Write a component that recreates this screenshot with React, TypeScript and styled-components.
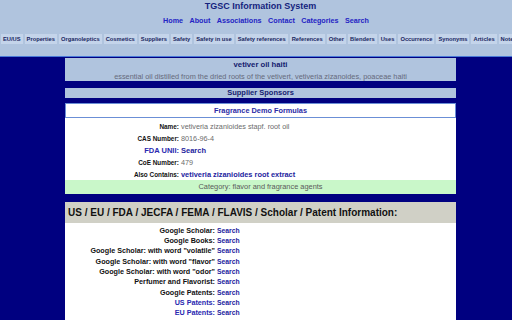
import React from 'react';
import styled, { createGlobalStyle } from 'styled-components';

const GlobalStyle = createGlobalStyle`
  html, body {
    margin: 0;
    padding: 0;
    background: #000080;
  }
  body {
    font-family: "Liberation Sans", Arial, sans-serif;
    width: 512px;
    height: 320px;
    overflow: hidden;
  }
`;

const Header = styled.header`
  background: #b0c4de;
  height: 56px;
  border-bottom: 1px solid #4a7ad8;
  display: flex;
  flex-direction: column;
  align-items: center;
`;

const SiteTitle = styled.h1`
  margin: 0;
  padding-left: 9px;
  font-size: 9px;
  line-height: 12px;
  font-weight: bold;
  color: #14237d;
`;

const Nav = styled.nav`
  margin-top: 3px;
  padding-left: 20px;
  display: flex;
  gap: 6.5px;
  line-height: 11px;
`;

const NavLink = styled.a`
  font-size: 7.2px;
  font-weight: bold;
  color: #2323c4;
  text-decoration: none;
`;

const Tabs = styled.div`
  margin-top: 8px;
  align-self: stretch;
  display: flex;
  gap: 2px;
  padding-left: 1px;
  overflow: hidden;
  white-space: nowrap;
`;

const Tab = styled.span`
  flex: none;
  height: 10px;
  line-height: 10px;
  padding: 0 2px;
  background: #c4d4ea;
  font-size: 5.75px;
  font-weight: bold;
  color: #19265f;
`;

const Main = styled.main`
  padding: 1px 56px 0 65px;
  display: flex;
  flex-direction: column;
`;

const TitleBox = styled.section`
  background: #b0c4de;
  height: 23px;
  padding-top: 2px;
  box-sizing: border-box;
  text-align: center;
`;

const ProductName = styled.div`
  font-size: 7.7px;
  font-weight: bold;
  line-height: 10px;
  color: #14206e;
`;

const Description = styled.div`
  margin-top: 3px;
  font-size: 7.35px;
  line-height: 8px;
  color: #666a7c;
  white-space: nowrap;
`;

const BarBox = styled.div`
  margin-top: 7px;
  background: #b0c4de;
  height: 10px;
  line-height: 10px;
  text-align: center;
  font-size: 7.5px;
  font-weight: bold;
  color: #14206e;
`;

const WhitePanel = styled.section<{ $gap: number }>`
  margin-top: ${p => p.$gap}px;
  background: #fff;
  display: flex;
  flex-direction: column;
`;

const FormulasBox = styled.div`
  height: 15px;
  box-sizing: border-box;
  border: 1px solid #6b8fd6;
  line-height: 13px;
  text-align: center;
  font-size: 7.35px;
  font-weight: bold;
  color: #2a2aa6;
`;

const DataGrid = styled.div<{ $label: number; $row: number }>`
  display: grid;
  grid-template-columns: ${p => p.$label}px 1fr;
  grid-auto-rows: ${p => p.$row}px;
  column-gap: 2px;
  align-items: center;
  padding-top: 2px;
`;

const Label = styled.span<{ $size: number; $link?: boolean }>`
  text-align: right;
  font-size: ${p => p.$size}px;
  font-weight: bold;
  color: ${p => (p.$link ? '#2828b0' : '#111')};
  white-space: nowrap;
`;

const Value = styled.span`
  font-size: 7.25px;
  color: #6b6b6b;
  white-space: nowrap;
`;

const ValueLink = styled.a<{ $size: number }>`
  font-size: ${p => p.$size}px;
  font-weight: bold;
  color: #23239e;
  text-decoration: none;
  white-space: nowrap;
`;

const Category = styled.div`
  height: 14px;
  line-height: 14px;
  background: #c9f7c9;
  text-align: center;
  font-size: 7.4px;
  color: #5a5a5a;
`;

const InfoHeading = styled.h2`
  margin: 8px 0 0;
  height: 21px;
  line-height: 21px;
  padding-left: 3px;
  background: #d0d0c6;
  font-size: 10px;
  font-weight: bold;
  color: #111;
`;

const infoRows: { label: string; link?: boolean }[] = [
  { label: 'Google Scholar:' },
  { label: 'Google Books:' },
  { label: 'Google Scholar: with word "volatile"' },
  { label: 'Google Scholar: with word "flavor"' },
  { label: 'Google Scholar: with word "odor"' },
  { label: 'Perfumer and Flavorist:' },
  { label: 'Google Patents:' },
  { label: 'US Patents:', link: true },
  { label: 'EU Patents:', link: true },
  { label: 'PatentScope:', link: true },
];

const tabs = [
  'EU/US', 'Properties', 'Organoleptics', 'Cosmetics', 'Suppliers', 'Safety',
  'Safety in use', 'Safety references', 'References', 'Other', 'Blenders', 'Uses',
  'Occurrence', 'Synonyms', 'Articles', 'Notes',
];

const App: React.FC = () => {
  return (
    <>
      <GlobalStyle />
      <Header>
        <SiteTitle>TGSC Information System</SiteTitle>
        <Nav>
          {['Home', 'About', 'Associations', 'Contact', 'Categories', 'Search'].map(item => (
            <NavLink key={item} href="#">{item}</NavLink>
          ))}
        </Nav>
        <Tabs>
          {tabs.map(t => (
            <Tab key={t}>{t}</Tab>
          ))}
        </Tabs>
      </Header>

      <Main>
        <TitleBox>
          <ProductName>vetiver oil haiti</ProductName>
          <Description>
            essential oil distilled from the dried roots of the vetivert, vetiveria zizanoides, poaceae haiti
          </Description>
        </TitleBox>

        <BarBox>Supplier Sponsors</BarBox>

        <WhitePanel $gap={5}>
          <FormulasBox>Fragrance Demo Formulas</FormulasBox>
          <DataGrid $label={114} $row={12}>
            <Label $size={6.4}>Name:</Label>
            <Value>vetiveria zizanioides stapf. root oil</Value>
            <Label $size={6.4}>CAS Number:</Label>
            <Value>8016-96-4</Value>
            <Label $size={7.5} $link>FDA UNII:</Label>
            <ValueLink $size={7.5} href="#">Search</ValueLink>
            <Label $size={6.4}>CoE Number:</Label>
            <Value>479</Value>
            <Label $size={6.4}>Also Contains:</Label>
            <ValueLink $size={7.4} href="#">vetiveria zizanioides root extract</ValueLink>
          </DataGrid>
          <Category>Category: flavor and fragrance agents</Category>
        </WhitePanel>

        <InfoHeading>US / EU / FDA / JECFA / FEMA / FLAVIS / Scholar / Patent Information:</InfoHeading>
        <WhitePanel $gap={0}>
          <DataGrid $label={150} $row={10.35}>
            {infoRows.map(r => (
              <React.Fragment key={r.label}>
                <Label $size={7.2} $link={r.link}>{r.label}</Label>
                <ValueLink $size={6.8} href="#">Search</ValueLink>
              </React.Fragment>
            ))}
          </DataGrid>
        </WhitePanel>
      </Main>
    </>
  );
};

export default App;
